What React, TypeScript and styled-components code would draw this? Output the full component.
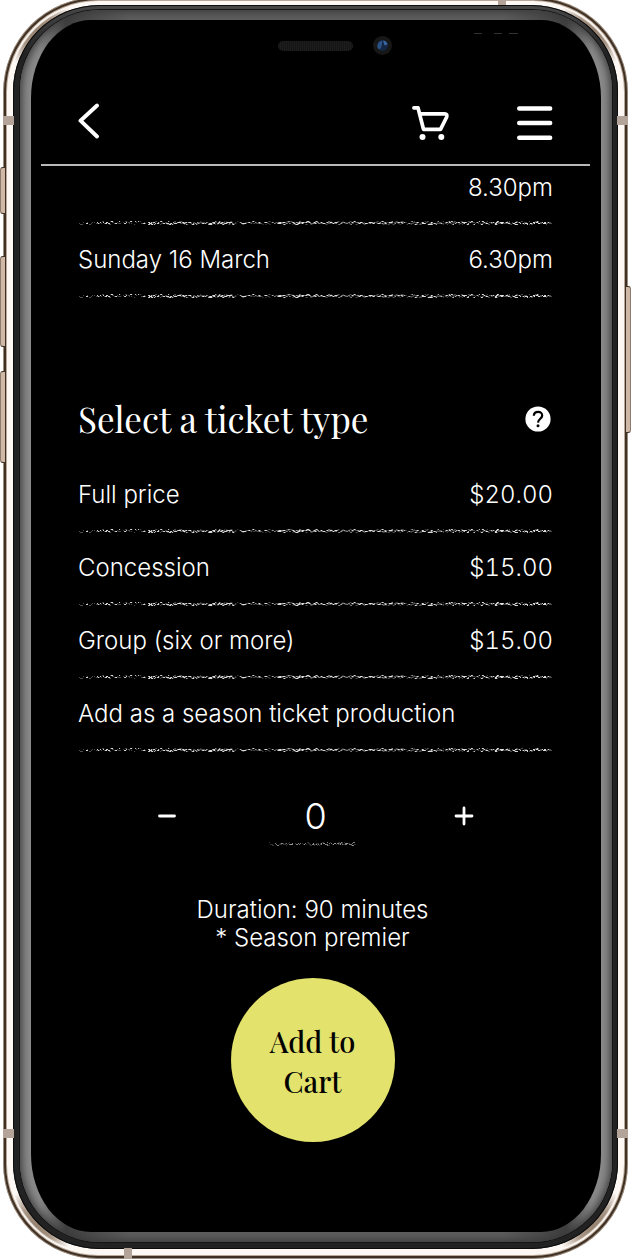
import React, { useState } from 'react';
import styled, { createGlobalStyle } from 'styled-components';

const GlobalStyle = createGlobalStyle`
  *, *::before, *::after { box-sizing: border-box; }
  body {
    margin: 0;
    background: #fff;
    color: #fff;
    font-family: Inter, 'Liberation Sans', sans-serif;
    font-size: 24px;
    line-height: 28px;
  }
  button, input { font: inherit; color: inherit; border: 0; padding: 0; background: none; }
  button { cursor: pointer; }
`;

const serif = `'Playfair Display', 'Liberation Serif', serif`;

/* ---------- phone body ---------- */

const Stage = styled.div`
  overflow: hidden;
  padding: 0 5px 0 3px;
`;

const corner = (at: string) =>
  `radial-gradient(circle at ${at}, #86725f 0, #a89686 22px, rgba(168, 150, 134, 0) 42px)`;

const Rail = styled.div`
  position: relative;
  margin-top: -3px;
  padding: 8px 10px 10px;
  border-radius: 95px;
  background:
    ${corner('26px 26px')}, ${corner('calc(100% - 26px) 26px')},
    ${corner('26px calc(100% - 26px)')}, ${corner('calc(100% - 26px) calc(100% - 26px)')},
    #fdf8f4;
  box-shadow:
    inset 0 0 0 1px #9c8b7c,
    inset 0 0 0 3px #3f3024,
    inset 0 0 0 4px #b9a899,
    inset 0 0 1px 6px #fdf8f4;
`;

const Bezel = styled.div`
  position: relative;
  padding: 5px 6px 7px 7px;
  border-radius: 86px;
  background: linear-gradient(#484848, #222 50px);
  box-shadow: inset 0 0 0 1px #0c0c0c;
`;

const Bevel = styled.div`
  padding: 10px 11px;
  border-radius: 80px;
  background: linear-gradient(
    90deg,
    #8a8a8a 20px,
    #404040 46px,
    #5e5e5e 110px,
    #5e5e5e calc(100% - 110px),
    #404040 calc(100% - 46px),
    #8a8a8a calc(100% - 20px)
  );
  box-shadow: inset 0 0 9px 2px #3a3a3a, 0 0 0 1px #151515;
`;

const Screen = styled.div`
  position: relative;
  border-radius: 60px / 78px;
  background: #000;
`;

const SideButton = styled.span<{ $side: 'left' | 'right'; $top: number; $length: number }>`
  position: absolute;
  ${(p) => p.$side}: -3px;
  top: ${(p) => p.$top}px;
  width: 6px;
  height: ${(p) => p.$length}px;
  border: 1px solid #3f3024;
  border-${(p) => p.$side}-color: #8d7a6a;
  border-radius: ${(p) => (p.$side === 'left' ? '3px 0 0 3px' : '0 3px 3px 0')};
  background: #cfb9a6;
`;

const Band = styled.span<{ $edge: 'left' | 'right' | 'top' | 'bottom' }>`
  position: absolute;
  ${(p) => p.$edge}: 0;
  width: ${(p) => (p.$edge === 'left' || p.$edge === 'right' ? 11 : 8)}px;
  height: ${(p) => (p.$edge === 'left' || p.$edge === 'right' ? 9 : 11)}px;
  background: #b3a399;
`;
const UpperBand = styled(Band)`top: 119px;`;
const LowerBand = styled(Band)`bottom: 121px;`;
const TopBand = styled(Band)`right: 122px; height: 8px;`;
const BottomBand = styled(Band)`left: 121px;`;

const SensorBar = styled.div`
  display: flex;
  align-items: center;
  justify-content: center;
  gap: 20px;
  padding: 16px 0 0 37px;
`;

const Speaker = styled.span`
  width: 75px;
  height: 10px;
  border-radius: 5px;
  background: repeating-linear-gradient(90deg, #1d1d1d 0 1px, #151515 1px 2px);
`;

const Glint = styled.svg`
  position: absolute;
  top: 13px;
  right: 83px;
`;

/* ---------- app bar ---------- */

const AppBar = styled.header`
  display: flex;
  align-items: center;
  margin: 0 11px 0 10px;
  padding: 31px 37px 4px 36px;
  height: 111px;
  border-bottom: 2px solid #b9b9b9;
`;

const IconButton = styled.button`
  display: flex;
  align-items: center;
  justify-content: center;
`;

const BackButton = styled(IconButton)`
  margin-right: auto;
`;

const MenuButton = styled(IconButton)`
  margin-left: 67px;
`;

/* ---------- content ---------- */

const Content = styled.main`
  padding: 8px 48px 90px 47px;
`;

const List = styled.ul`
  list-style: none;
  margin: 0;
  padding: 0;
`;

const Row = styled.button<{ $scrolled?: boolean }>`
  display: flex;
  align-items: center;
  justify-content: space-between;
  width: 100%;
  height: ${(p) => (p.$scrolled ? 47 : 69)}px;
  padding-bottom: ${(p) => (p.$scrolled ? 20 : 0)}px;
  text-align: left;
  font-weight: 300;
`;

const Time = styled.span`
  margin-left: auto;
`;

const Price = styled.span`
  margin-left: auto;
  font-variant-numeric: tabular-nums;
`;

const SectionHead = styled.div`
  display: flex;
  align-items: center;
  justify-content: space-between;
  margin: 97px 0 17px;
  padding-right: 2px;
`;

const Title = styled.h2`
  margin: 0;
  font: 400 35px/48px ${serif};
`;

const Rough = styled.svg<{ $short?: boolean }>`
  display: block;
  width: ${(p) => (p.$short ? '90px' : '100%')};
  height: 4px;
`;

const Stepper = styled.div`
  display: flex;
  align-items: flex-start;
  justify-content: space-between;
  padding: 44px 78px 0;
`;

const StepButton = styled(IconButton)`
  width: 22px;
  height: 40px;
`;

const Count = styled.label`
  display: block;
  width: 96px;
`;

const CountInput = styled.input`
  display: block;
  width: 100%;
  height: 46px;
  padding-bottom: 6px;
  font-size: 36px;
  font-weight: 300;
  line-height: 40px;
  text-align: center;
  outline: none;
`;

const Summary = styled.section`
  display: flex;
  flex-direction: column;
  align-items: center;
  gap: 26px;
  padding: 50px 6px 0 0;
`;

const Note = styled.p`
  margin: 0;
  font-weight: 300;
  text-align: center;
`;

const AddButton = styled.button`
  width: 164px;
  height: 164px;
  padding: 2px 32px 0;
  border-radius: 50%;
  background: #e2e26c;
  color: #000;
  font: 500 29px/40px ${serif};
`;

/* Hand-drawn rule: a scatter of tiny flecks along a wavering line. */
function fleckPath(width: number, seed: number) {
  let s = seed;
  const rnd = () => {
    s = (s * 16807) % 2147483647;
    return s / 2147483647;
  };
  let bright = '';
  let dim = '';
  for (let x = 1; x < width - 2; x += 1) {
    const edge = x < width * 0.14 || (x > width * 0.33 && x < width * 0.42);
    const flecks = edge ? 1 : 2;
    for (let i = 0; i < flecks; i += 1) {
      const y = Math.min(3, Math.floor((rnd() + rnd()) * 2));
      const w = 1 + Math.floor(rnd() * 2);
      const pick = rnd();
      if (pick < 0.32) bright += `M${x} ${y}h${w}v1h-${w}z`;
      else if (pick < 0.75) dim += `M${x} ${y}h${w}v1h-${w}z`;
    }
  }
  return { bright, dim };
}

const longFlecks = fleckPath(474, 4242);
const shortFlecks = fleckPath(90, 777);

function RoughRule({ short }: { short?: boolean }) {
  const flecks = short ? shortFlecks : longFlecks;
  return (
    <Rough
      $short={short}
      viewBox={short ? '0 0 90 4' : '0 0 474 4'}
      preserveAspectRatio="none"
      aria-hidden="true"
    >
      <path d={flecks.dim} fill="#fff" fillOpacity={short ? 0.2 : 0.3} />
      <path d={flecks.bright} fill="#fff" fillOpacity={short ? 0.5 : 0.85} />
    </Rough>
  );
}

const tickets = [
  { name: 'Full price', price: '$20.00' },
  { name: 'Concession', price: '$15.00' },
  { name: 'Group (six or more)', price: '$15.00' },
  { name: 'Add as a season ticket production', price: '' },
];

export default function App() {
  const [count, setCount] = useState(0);

  return (
    <>
      <GlobalStyle />
      <Stage>
        <Rail>
          <SideButton $side="left" $top={170} $length={47} />
          <SideButton $side="left" $top={259} $length={91} />
          <SideButton $side="left" $top={374} $length={92} />
          <SideButton $side="right" $top={289} $length={147} />
          <Bezel>
            <Bevel>
              <Screen>
                <SensorBar>
                  <Speaker />
                  <svg width="19" height="19" viewBox="0 0 19 19" aria-hidden="true">
                    <circle cx="9.5" cy="9.5" r="9.5" fill="#171717" />
                    <circle cx="9.5" cy="9.5" r="5.4" fill="#152644" />
                    <path d="M5 7.5a5 5 0 0 1 4-3v3.500l-1 4-2 1.500a5 5 0 0 1-1-6z" fill="#2c5284" />
                    <path d="M10 4.500a5 5 0 0 1 4.500 4l-3 1z" fill="#3a669f" />
                  </svg>
                </SensorBar>
                <Glint width="44" height="1" viewBox="0 0 44 1" aria-hidden="true">
                  <path d="M0 .5h8M20 .5h8M35 .5h9" stroke="#333" />
                </Glint>
                <AppBar>
                  <BackButton type="button" aria-label="Back">
                    <svg width="24" height="40" viewBox="0 0 24 40" fill="none" stroke="#fff" strokeWidth="3.900" strokeLinecap="round" strokeLinejoin="round">
                      <path d="M20 2.500 3.500 17.700 20 33.500" />
                    </svg>
                  </BackButton>
                  <IconButton type="button" aria-label="Cart">
                    <svg width="38" height="36" viewBox="0 0 38 36" fill="none" stroke="#fff" strokeWidth="3.700" strokeLinecap="round" strokeLinejoin="round">
                      <path d="M1.900 2.800H6l5.500 21.500h17L34.700 12q.800-3.200-2-3.200H8" />
                      <circle cx="10.500" cy="32" r="3" fill="#fff" stroke="none" />
                      <circle cx="29.300" cy="32" r="3" fill="#fff" stroke="none" />
                    </svg>
                  </IconButton>
                  <MenuButton type="button" aria-label="Menu">
                    <svg width="36" height="36" viewBox="0 0 36 36" stroke="#fff" strokeWidth="4.400" strokeLinecap="round">
                      <path d="M2.200 3.500h31M2.200 18h31M2.200 32.700h31" />
                    </svg>
                  </MenuButton>
                </AppBar>
                <Content>
                  <List>
                    <li>
                      <Row type="button" $scrolled>
                        <Time>8.30pm</Time>
                      </Row>
                      <RoughRule />
                    </li>
                    <li>
                      <Row type="button">
                        <span>Sunday 16 March</span>
                        <Time>6.30pm</Time>
                      </Row>
                      <RoughRule />
                    </li>
                  </List>
                  <SectionHead>
                    <Title>Select a ticket type</Title>
                    <IconButton type="button" aria-label="Ticket type help">
                      <svg width="26" height="26" viewBox="0 0 26 26" fill="none">
                        <circle cx="13" cy="13" r="12.600" fill="#fff" />
                        <path d="M8.800 9.800c.2-5.400 8.600-5.200 8.400-.2-.1 3-4 3.300-4.200 7" stroke="#000" strokeWidth="2.200" />
                        <circle cx="13" cy="19.800" r="1.500" fill="#000" />
                      </svg>
                    </IconButton>
                  </SectionHead>
                  <List>
                    {tickets.map((t) => (
                      <li key={t.name}>
                        <Row type="button">
                          <span>{t.name}</span>
                          {t.price && <Price>{t.price}</Price>}
                        </Row>
                        <RoughRule />
                      </li>
                    ))}
                  </List>
                  <Stepper>
                    <StepButton type="button" aria-label="Fewer tickets" onClick={() => setCount(Math.max(0, count - 1))}>
                      <svg width="22" height="22" viewBox="0 0 22 22" stroke="#fff" strokeWidth="2.800" strokeLinecap="round">
                        <path d="M3.500 11h15" />
                      </svg>
                    </StepButton>
                    <Count>
                      <CountInput
                        aria-label="Number of tickets"
                        inputMode="numeric"
                        value={count}
                        onChange={(e) => setCount(Number(e.target.value.replace(/\D/g, '')))}
                      />
                      <RoughRule short />
                    </Count>
                    <StepButton type="button" aria-label="More tickets" onClick={() => setCount(count + 1)}>
                      <svg width="22" height="22" viewBox="0 0 22 22" stroke="#fff" strokeWidth="2.800" strokeLinecap="round">
                        <path d="M3 11h16M11 3v16" />
                      </svg>
                    </StepButton>
                  </Stepper>
                  <Summary>
                    <Note>
                      Duration: 90 minutes
                      <br />* Season premier
                    </Note>
                    <AddButton type="button">Add to Cart</AddButton>
                  </Summary>
                </Content>
              </Screen>
            </Bevel>
          </Bezel>
          <UpperBand $edge="left" />
          <UpperBand $edge="right" />
          <LowerBand $edge="left" />
          <LowerBand $edge="right" />
          <TopBand $edge="top" />
          <BottomBand $edge="bottom" />
        </Rail>
      </Stage>
    </>
  );
}
